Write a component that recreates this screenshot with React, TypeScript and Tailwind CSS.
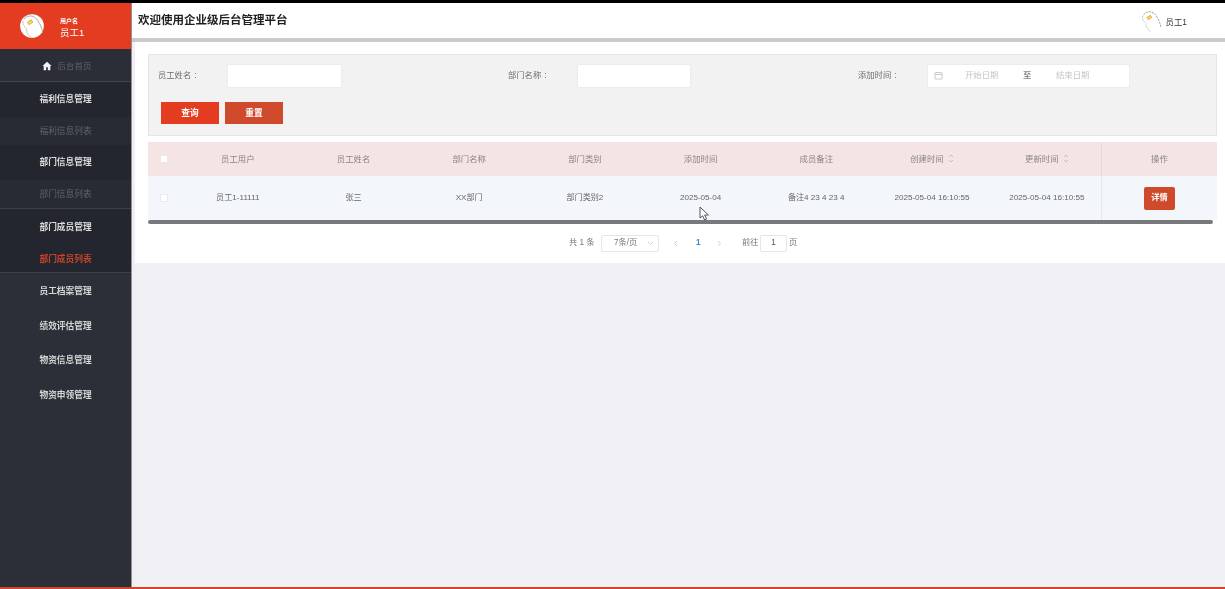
import React from "react";

const font = { fontFamily: '"Liberation Sans","Noto Sans CJK SC",sans-serif' };

function Chick({ size, outline }: { size: number; outline?: boolean }) {
  return (
    <svg width={size} height={size} viewBox="0 0 32 32" className="shrink-0">
      <circle cx="16" cy="16" r="15.8" fill="#fff" />
      <path d="M5 7 C11 0 20 2 24 9 C27 14 30 20 30 25" fill="none" stroke={outline ? "#8a8a80" : "#a8a498"} strokeWidth="1.2" strokeDasharray={outline ? "3 1.5" : undefined} />
      <path d="M4 9 C3 14 6 17 9 20 C8 24 11 28 15 31" fill="none" stroke={outline ? "#9a9a90" : "#bcb8ac"} strokeWidth="1.1" strokeDasharray={outline ? "2 2" : undefined} />
      <path d="M9 11 L15 7 L18 11 L12 15 Z" fill="#e9b43c" />
      <path d="M10 12 L15 9 L16 11 L12 13 Z" fill="#f6dc8c" />
    </svg>
  );
}

function NavHead({ children, h, border, dark }: { children: React.ReactNode; h: string; border?: boolean; dark?: boolean }) {
  return (
    <div className={`${h} ${border ? "border-b border-[#3d4048]" : ""} ${dark ? "bg-[#23262e]" : ""} flex items-center justify-center pt-[1px] text-[8.7px] font-bold text-[#dcdcdc]`}>
      {children}
    </div>
  );
}

function NavSub({ children, h, active, border }: { children: React.ReactNode; h: string; active?: boolean; border?: boolean }) {
  return (
    <div className={`${h} ${border ? "border-b border-[#3d4048]" : ""} flex items-center justify-center pt-[2px] text-[8.7px] ${active ? "text-[#c9432a] font-bold bg-[#23262e]" : "text-[#62646a] bg-[#282b33]"}`}>
      {children}
    </div>
  );
}

function NavPlain({ children, h }: { children: React.ReactNode; h: string }) {
  return <div className={`${h} flex items-center justify-center pt-[2px] text-[8.7px] font-bold text-[#d6d6d6]`}>{children}</div>;
}

function Sidebar() {
  return (
    <aside className="w-[132px] shrink-0 flex flex-col bg-[#2b2f37] border-r border-[#8f8f94]">
      <div className="h-[46px] bg-[#e33c21] flex items-center pl-[20px]">
        <Chick size={24} />
        <div className="ml-[16px] pt-[5px] flex flex-col text-white">
          <span className="text-[6px] font-bold leading-[9px]">用户名</span>
          <span className="text-[9.5px] leading-[14px]">员工1</span>
        </div>
      </div>
      <div className="h-[33px] bg-[#2b2e36] border-b border-[#41444b] flex items-center justify-center gap-[5px] pl-[3px] pt-[2px] text-[8.5px] text-[#5f6168]">
        <svg width="10" height="10" viewBox="0 0 24 24" fill="#f2f2f2"><path d="M12 2 1 12h3v10h6v-7h4v7h6V12h3z" /></svg>
        <span>后台首页</span>
      </div>
      <NavHead h="h-[35px]" dark>福利信息管理</NavHead>
      <NavSub h="h-[28px]">福利信息列表</NavSub>
      <NavHead h="h-[35px]" dark>部门信息管理</NavHead>
      <NavSub h="h-[29px]" border>部门信息列表</NavSub>
      <NavHead h="h-[36px]" dark>部门成员管理</NavHead>
      <NavSub h="h-[28px]" active border>部门成员列表</NavSub>
      <NavPlain h="h-[35px]">员工档案管理</NavPlain>
      <NavPlain h="h-[35px]">绩效评估管理</NavPlain>
      <NavPlain h="h-[34px]">物资信息管理</NavPlain>
      <NavPlain h="h-[35px]">物资申领管理</NavPlain>
    </aside>
  );
}

function Field({ label, children }: { label: string; children: React.ReactNode }) {
  return (
    <div className="w-[350px] flex items-center">
      <span className="w-[69px] text-[8.3px] text-[#6d6d6d]">
        {label}
        <span className="ml-[3px]">:</span>
      </span>
      {children}
    </div>
  );
}

function Sort({ text }: { text: string }) {
  return (
    <span className="flex items-center justify-center gap-[4px]">
      {text}
      <svg width="6" height="9" viewBox="0 0 6 9" fill="none" stroke="#b5b5b5" strokeWidth="0.8"><path d="M1 3 3 1 5 3M1 6 3 8 5 6" /></svg>
    </span>
  );
}

const headers = ["员工用户", "员工姓名", "部门名称", "部门类别", "添加时间", "成员备注"];
const cells = ["员工1-11111", "张三", "XX部门", "部门类别2", "2025-05-04", "备注4 23 4 23 4"];

function Table() {
  const cols = "grid grid-cols-[32px_repeat(7,115.7px)_111px_1fr] items-center text-center";
  return (
    <div className="mt-[6px] w-[1069px] relative">
      <div className={`${cols} h-[34px] bg-[#f5e4e4] text-[8.4px] text-[#8a8484]`}>
        <span className="flex justify-center"><span className="w-[8px] h-[8px] bg-white border border-[#ece6e6] rounded-[1px]" /></span>
        {headers.map((h) => <span key={h}>{h}</span>)}
        <Sort text="创建时间" />
        <span className="pl-[3px]"><Sort text="更新时间" /></span>
        <span className="h-full flex items-center justify-center border-l border-[#e8d8d8]">操作</span>
      </div>
      <div className={`${cols} h-[44px] bg-[#f3f6fa] text-[8.1px] text-[#666]`}>
        <span className="flex justify-center"><span className="w-[8px] h-[8px] bg-white border border-[#e6e8ec] rounded-[1px]" /></span>
        {cells.map((c) => <span key={c}>{c}</span>)}
        <span className="whitespace-nowrap">2025-05-04 16:10:55</span>
        <span className="whitespace-nowrap pl-[3px]">2025-05-04 16:10:55</span>
        <span className="h-full flex items-center justify-center border-l border-[#e6e8ec]">
          <span className="w-[31px] h-[23px] rounded-[2px] bg-[#cf4a2b] text-white text-[8.2px] font-bold flex items-center justify-center">详情</span>
        </span>
      </div>
      <div className="h-[4px] w-[1065px] rounded-[2px] bg-[#77797b]" />
      <svg width="11" height="15" viewBox="0 0 11 15" className="absolute left-[551px] top-[64px]">
        <path d="M1 1 V12 L3.6 9.8 L5.6 14 L7.6 13 L5.6 9 H9.4 Z" fill="#fff" stroke="#4f5560" strokeWidth="1" />
      </svg>
    </div>
  );
}

function Pagination() {
  return (
    <div className="mt-[10px] h-[18px] w-[1069px] flex items-center text-[8.2px] text-[#77777a] pl-[421px]">
      <span className="w-[32px] pt-[1px]">共 1 条</span>
      <span className="w-[58px] h-[17px] bg-white border border-[#e6e6e6] rounded-[2px] flex items-center justify-between pl-[12px] pr-[4px] pt-[1px]">
        7条/页
        <svg width="7" height="5" viewBox="0 0 7 5" fill="none" stroke="#c4c4c4" strokeWidth="0.8"><path d="M1 1 3.5 3.5 6 1" /></svg>
      </span>
      <svg width="5" height="7" viewBox="0 0 5 7" fill="none" stroke="#c9c9c9" strokeWidth="0.9" className="ml-[14px]"><path d="M4 1 1.5 3.5 4 6" /></svg>
      <span className="w-[6px] ml-[18px] pt-[1px] font-bold text-[#3f86d6]">1</span>
      <svg width="5" height="7" viewBox="0 0 5 7" fill="none" stroke="#c9c9c9" strokeWidth="0.9" className="ml-[15px]"><path d="M1 1 3.5 3.5 1 6" /></svg>
      <span className="ml-[20px] w-[18px] pt-[1px]">前往</span>
      <span className="w-[27px] h-[17px] bg-white border border-[#e6e6e6] rounded-[2px] flex items-center justify-center pt-[1px] text-[#555]">1</span>
      <span className="ml-[2px] pt-[1px]">页</span>
    </div>
  );
}

export default function App() {
  return (
    <div style={font} className="w-[1225px] h-[589px] overflow-hidden flex flex-col bg-[#efeff4] blur-[0.5px]">
      <div className="h-[3px] bg-black shrink-0" />
      <div className="flex-1 flex min-h-0">
        <Sidebar />
        <main className="flex-1 min-w-0 flex flex-col">
          <header className="h-[35px] shrink-0 bg-white flex items-center justify-between pl-[6px] pr-[38px] border-b-[4px] border-[#c9cacd] box-content">
            <h1 className="text-[11.5px] font-bold text-[#1f1f1f]">欢迎使用企业级后台管理平台</h1>
            <div className="flex items-center gap-[4px] text-[8.4px] text-[#333]">
              <Chick size={22} outline />
              <span className="pt-[3px]">员工1</span>
            </div>
          </header>
          <section className="ml-[3px] h-[221px] bg-white pl-[13px] pt-[12px]">
            <div className="w-[1069px] h-[82px] bg-[#f2f2f2] border border-[#e4e4e4] pl-[9px] pt-[8px] flex flex-col">
              <div className="flex h-[25px]">
                <Field label="员工姓名">
                  <span className="w-[115px] h-[24px] bg-white border border-[#ececec] rounded-[2px]" />
                </Field>
                <Field label="部门名称">
                  <span className="w-[114px] h-[24px] bg-white border border-[#ececec] rounded-[2px]" />
                </Field>
                <Field label="添加时间">
                  <span className="w-[203px] h-[24px] bg-white border border-[#ececec] rounded-[2px] flex items-center text-[8.4px] text-[#c4c4c4]">
                    <svg width="9" height="9" viewBox="0 0 9 9" fill="none" stroke="#c4c4c4" strokeWidth="0.9" className="ml-[6px]"><rect x="1" y="1.5" width="7" height="6.5" rx="0.5" /><path d="M1 3.5H8" /></svg>
                    <span className="ml-[22px] w-[58px]">开始日期</span>
                    <span className="text-[#444] w-[33px]">至</span>
                    <span>结束日期</span>
                  </span>
                </Field>
              </div>
              <div className="mt-[14px] ml-[3px] flex gap-[6px] text-[8.7px] text-white font-bold">
                <span className="w-[58px] h-[22px] pt-[1px] bg-[#e33c21] flex items-center justify-center">查询</span>
                <span className="w-[58px] h-[22px] pt-[1px] bg-[#cf4a2b] flex items-center justify-center">重置</span>
              </div>
            </div>
            <Table />
            <Pagination />
          </section>
        </main>
      </div>
      <div className="h-[2px] bg-[#d2452c] shrink-0" />
    </div>
  );
}
